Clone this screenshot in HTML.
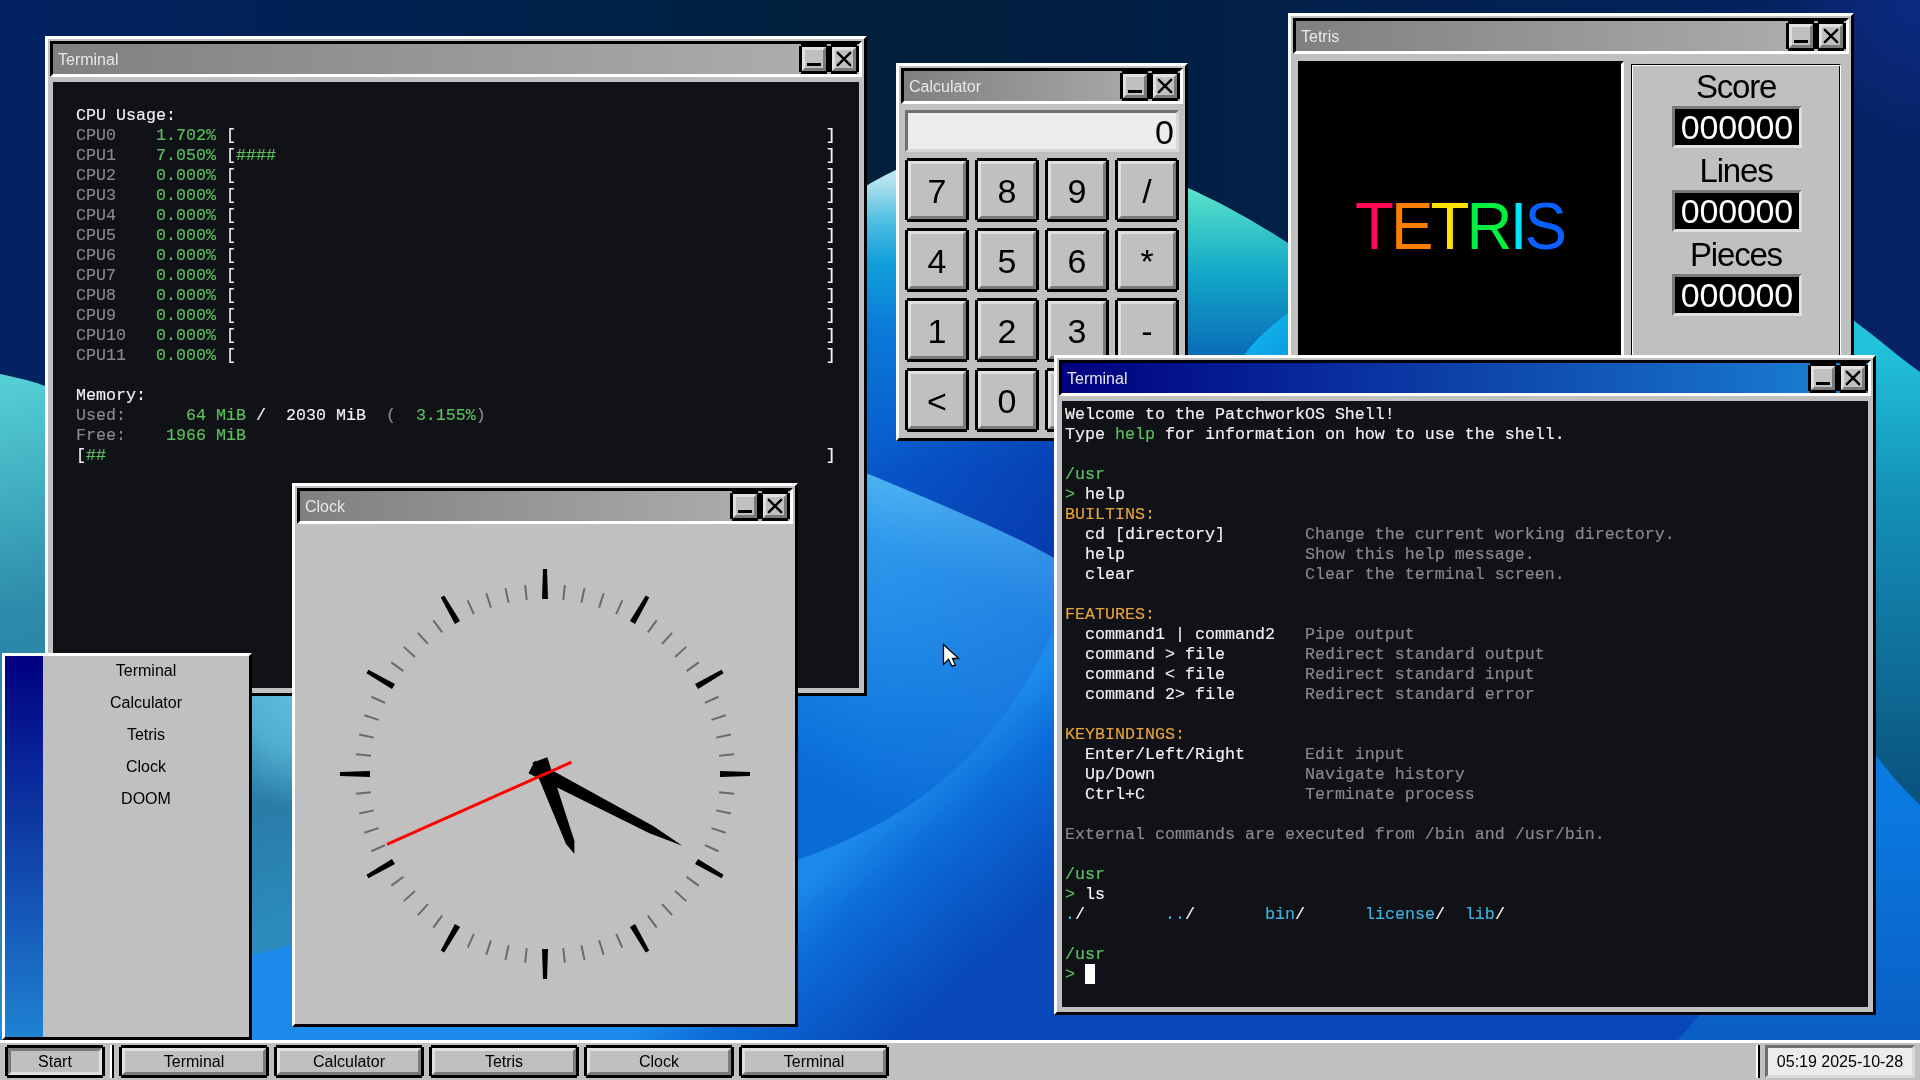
<!DOCTYPE html><html><head><meta charset="utf-8"><style>
*{box-sizing:border-box;margin:0;padding:0}
html,body{width:1920px;height:1080px;overflow:hidden;background:#001a4a;font-family:"Liberation Sans",sans-serif}
.win,.tbar,.sm{will-change:transform}
.abs{position:absolute}
.win{position:absolute;background:#c0c0c0;border:3px solid;border-color:#fff #000 #000 #fff}
.tb{position:absolute;left:2px;top:2px;height:36px;border:3px solid;border-color:#000 #fff #fff #000;background:linear-gradient(90deg,#808080,#b0b0b0)}
.tb.act{background:linear-gradient(90deg,#000080,#1a84d4)}
.tt{position:absolute;left:5px;top:1px;height:30px;line-height:30px;font-size:16px;color:#e8e8e8;white-space:pre}
.btn{position:absolute;top:0;width:30px;height:30px;background:#000;clip-path:polygon(2px 0,28px 0,28px 2px,30px 2px,30px 28px,28px 28px,28px 30px,2px 30px,2px 28px,0 28px,0 2px,2px 2px)}
.bi{position:absolute;left:3px;top:3px;width:24px;height:24px;border:3px solid;border-color:#e0e0e0 #7a7a7a #7a7a7a #e0e0e0;background:#c0c0c0}
.content{position:absolute}
.term{background:#111217;font-family:"Liberation Mono",monospace;font-size:16.667px;line-height:20px;white-space:pre;color:#f2f2f2;overflow:hidden;-webkit-text-stroke:0.15px currentColor}
.term .l{position:absolute;left:3px;height:20px}
.g{color:#5cc15c}.gr{color:#8a8a8a}.o{color:#e8a33d}.c{color:#3fb4e0}.w{color:#f2f2f2}
.tbar{position:absolute;left:0;top:1040px;width:1920px;height:40px;background:#c0c0c0;border-top:3px solid #fff;z-index:20}
.tbtn{position:absolute;top:2px;height:33px;background:#000;clip-path:polygon(2px 0,calc(100% - 2px) 0,calc(100% - 2px) 2px,100% 2px,100% calc(100% - 2px),calc(100% - 2px) calc(100% - 2px),calc(100% - 2px) 100%,2px 100%,2px calc(100% - 2px),0 calc(100% - 2px),0 2px,2px 2px)}
.tbi{position:absolute;left:3px;top:3px;right:3px;bottom:3px;border:3px solid;border-color:#e0e0e0 #7a7a7a #7a7a7a #e0e0e0;background:#c0c0c0;font-size:16px;color:#000;text-align:center;line-height:21px;white-space:pre}
.tbi.pr{border-color:#7a7a7a #e0e0e0 #e0e0e0 #7a7a7a}
.cbtn{position:absolute;width:64px;height:64px;background:#000;clip-path:polygon(2px 0,62px 0,62px 2px,64px 2px,64px 62px,62px 62px,62px 64px,2px 64px,2px 62px,0 62px,0 2px,2px 2px)}
.cbi{position:absolute;left:3px;top:3px;width:58px;height:58px;border:3px solid;border-color:#e0e0e0 #7a7a7a #7a7a7a #e0e0e0;background:#c0c0c0;font-size:34px;color:#000;text-align:center;line-height:54px}
.sbox{position:absolute;left:40px;width:130px;height:42px;border:3px solid;border-color:#7a7a7a #e0e0e0 #e0e0e0 #7a7a7a;background:#000;color:#fff;font-size:34px;line-height:37px;text-align:center;letter-spacing:-0.2px;text-indent:-0.2px}
.slab{position:absolute;left:0;width:100%;text-align:center;font-size:33px;color:#000;letter-spacing:-1.2px;line-height:32px}
</style></head><body><svg class="abs" style="left:0;top:0" width="1920" height="1080" viewBox="0 0 1920 1080">
<defs>
<linearGradient id="navy" x1="0" y1="0" x2="1920" y2="0" gradientUnits="userSpaceOnUse">
<stop offset="0" stop-color="#022262"/><stop offset="0.45" stop-color="#00203c"/><stop offset="0.68" stop-color="#02204a"/><stop offset="1" stop-color="#062266"/></linearGradient>
<radialGradient id="tr" cx="1920" cy="0" r="140" gradientUnits="userSpaceOnUse"><stop offset="0" stop-color="#0c2a80" stop-opacity="1"/><stop offset="1" stop-color="#0e2e88" stop-opacity="0"/></radialGradient>
<linearGradient id="bluef" x1="0" y1="400" x2="0" y2="1080" gradientUnits="userSpaceOnUse">
<stop offset="0" stop-color="#0a80e8"/><stop offset="1" stop-color="#0848bc"/></linearGradient>
<linearGradient id="pc" x1="0" y1="150" x2="0" y2="470" gradientUnits="userSpaceOnUse">
<stop offset="0" stop-color="#d0f0f4"/><stop offset="0.1" stop-color="#b0e2ee"/><stop offset="0.22" stop-color="#50bfe2"/><stop offset="0.35" stop-color="#12a0da"/><stop offset="0.56" stop-color="#0a7ad8"/><stop offset="1" stop-color="#0858cc"/></linearGradient>
<linearGradient id="pcr" x1="1190" y1="190" x2="1190" y2="355" gradientUnits="userSpaceOnUse">
<stop offset="0" stop-color="#58e2c8"/><stop offset="0.5" stop-color="#12a8c8"/><stop offset="1" stop-color="#0a6cb8"/></linearGradient>
<linearGradient id="p1" x1="960" y1="515" x2="836" y2="788" gradientUnits="userSpaceOnUse">
<stop offset="0" stop-color="#4ab2f2"/><stop offset="0.2" stop-color="#2e98ec"/><stop offset="0.6" stop-color="#1a84e4"/><stop offset="1" stop-color="#0a6cd8"/></linearGradient>
<linearGradient id="p1o" x1="880" y1="0" x2="1060" y2="0" gradientUnits="userSpaceOnUse">
<stop offset="0" stop-color="#0a5ad0" stop-opacity="0"/><stop offset="1" stop-color="#0a5ad0" stop-opacity="0.4"/></linearGradient>
<linearGradient id="dk" x1="880" y1="440" x2="1060" y2="560" gradientUnits="userSpaceOnUse">
<stop offset="0" stop-color="#0636a8" stop-opacity="0"/><stop offset="1" stop-color="#0636a8" stop-opacity="0.9"/></linearGradient>
<linearGradient id="p2" x1="930" y1="770" x2="1050" y2="905" gradientUnits="userSpaceOnUse">
<stop offset="0" stop-color="#1c8aea"/><stop offset="0.3" stop-color="#0c6cd8"/><stop offset="1" stop-color="#0848b8"/></linearGradient>
<linearGradient id="pl" x1="0" y1="372" x2="120" y2="960" gradientUnits="userSpaceOnUse">
<stop offset="0" stop-color="#56d2d6"/><stop offset="0.4" stop-color="#2c8aaa"/><stop offset="0.8" stop-color="#2a7ca8"/><stop offset="1" stop-color="#2a8cbc"/></linearGradient>
<linearGradient id="pr" x1="1900" y1="340" x2="1900" y2="790" gradientUnits="userSpaceOnUse">
<stop offset="0" stop-color="#22c4dc"/><stop offset="0.35" stop-color="#1490b8"/><stop offset="1" stop-color="#0a5480"/></linearGradient>
<linearGradient id="pr2" x1="1900" y1="800" x2="1900" y2="1040" gradientUnits="userSpaceOnUse">
<stop offset="0" stop-color="#0a7ae0"/><stop offset="1" stop-color="#0a5ec4"/></linearGradient>
<linearGradient id="pb3" x1="1250" y1="330" x2="1290" y2="380" gradientUnits="userSpaceOnUse">
<stop offset="0" stop-color="#12b4ec"/><stop offset="1" stop-color="#0a90e0"/></linearGradient>
<radialGradient id="rl" cx="310" cy="680" r="130" gradientUnits="userSpaceOnUse">
<stop offset="0" stop-color="#62c4e4" stop-opacity="1"/><stop offset="0.55" stop-color="#58b8d8" stop-opacity="0.85"/><stop offset="1" stop-color="#58b8d8" stop-opacity="0"/></radialGradient>
<clipPath id="pcclip"><path d="M560 760 C 620 560 660 470 700 400 C 760 260 860 145 1010 145 C 1060 145 1210 160 1400 330 C 1500 420 1600 600 1700 800 L 560 800 Z"/></clipPath>
</defs>
<rect width="1920" height="1080" fill="url(#navy)"/>
<rect x="1600" y="0" width="320" height="300" fill="url(#tr)"/>
<path d="M0 420 C 400 300 1300 300 1920 420 L1920 1080 L0 1080 Z" fill="url(#bluef)"/>
<path d="M560 760 C 620 560 660 470 700 400 C 760 260 860 145 1010 145 C 1060 145 1210 160 1400 330 C 1500 420 1600 600 1700 800 L 560 800 Z" fill="url(#pc)"/>
<rect x="1186" y="150" width="104" height="210" fill="url(#pcr)" clip-path="url(#pcclip)"/>
<path d="M1240 360 C 1255 340 1270 325 1300 305 L1300 400 L1240 400 Z" fill="url(#pb3)"/>
<path d="M800 380 L1100 380 L1100 640 L800 640 Z" fill="url(#dk)"/>
<path d="M600 420 C 700 430 800 445 866 473 C 930 500 1000 528 1054 558 C 1150 610 1250 700 1300 800 L 600 1000 Z" fill="url(#p1)"/>
<path d="M600 420 C 700 430 800 445 866 473 C 930 500 1000 528 1054 558 C 1150 610 1250 700 1300 800 L 600 1000 Z" fill="url(#p1o)"/>
<path d="M1100 540 C 1050 610 1030 780 797 860 C 720 885 660 897 600 905 C 400 905 200 900 -10 900 L -10 1080 L 1920 1080 L 1920 900 Z" fill="url(#p2)"/>
<path d="M-10 372 C 20 378 35 382 45 386 C 300 480 600 700 700 800 L 291 945 C 200 970 100 995 -10 1020 Z" fill="url(#pl)"/>
<ellipse cx="310" cy="680" rx="130" ry="130" fill="url(#rl)"/>
<path d="M1876 755 C 1890 775 1905 790 1920 805 L1920 1080 L1640 1080 C 1700 1020 1800 900 1876 755 Z" fill="url(#pr2)"/>
<path d="M1700 200 C 1780 260 1830 300 1853 320 C 1880 340 1900 358 1920 372 L1920 805 C 1905 790 1890 775 1876 755 C 1850 720 1800 690 1700 680 Z" fill="url(#pr)"/>
</svg><div class="win" style="left:45px;top:36px;width:822px;height:660px;z-index:2"><div class="tb" style="width:812px"><div class="tt">Terminal</div><div class="btn" style="left:746px"><div class="bi"><div class="abs" style="left:2px;top:13px;width:14px;height:3px;background:#000"></div></div></div><div class="btn" style="left:776px"><div class="bi"><svg class="abs" style="left:-3px;top:-3px" width="24" height="24" viewBox="0 0 24 24"><path d="M5.8 5.8L18.2 18.2M18.2 5.8L5.8 18.2" stroke="#000" stroke-width="2.4" stroke-linecap="round"/></svg></div></div></div><div class="content term" style="left:5px;top:43px;width:806px;height:606px;"><div class="l" style="top:24px;left:3px"><span class="w">  CPU Usage:</span></div><div class="l" style="top:44px;left:3px">  <span class="gr">CPU0    </span><span class="g">1.702%</span><span class="w"> [</span><span class="g"></span><span class="w">                                                           ]</span></div><div class="l" style="top:64px;left:3px">  <span class="gr">CPU1    </span><span class="g">7.050%</span><span class="w"> [</span><span class="g">####</span><span class="w">                                                       ]</span></div><div class="l" style="top:84px;left:3px">  <span class="gr">CPU2    </span><span class="g">0.000%</span><span class="w"> [</span><span class="g"></span><span class="w">                                                           ]</span></div><div class="l" style="top:104px;left:3px">  <span class="gr">CPU3    </span><span class="g">0.000%</span><span class="w"> [</span><span class="g"></span><span class="w">                                                           ]</span></div><div class="l" style="top:124px;left:3px">  <span class="gr">CPU4    </span><span class="g">0.000%</span><span class="w"> [</span><span class="g"></span><span class="w">                                                           ]</span></div><div class="l" style="top:144px;left:3px">  <span class="gr">CPU5    </span><span class="g">0.000%</span><span class="w"> [</span><span class="g"></span><span class="w">                                                           ]</span></div><div class="l" style="top:164px;left:3px">  <span class="gr">CPU6    </span><span class="g">0.000%</span><span class="w"> [</span><span class="g"></span><span class="w">                                                           ]</span></div><div class="l" style="top:184px;left:3px">  <span class="gr">CPU7    </span><span class="g">0.000%</span><span class="w"> [</span><span class="g"></span><span class="w">                                                           ]</span></div><div class="l" style="top:204px;left:3px">  <span class="gr">CPU8    </span><span class="g">0.000%</span><span class="w"> [</span><span class="g"></span><span class="w">                                                           ]</span></div><div class="l" style="top:224px;left:3px">  <span class="gr">CPU9    </span><span class="g">0.000%</span><span class="w"> [</span><span class="g"></span><span class="w">                                                           ]</span></div><div class="l" style="top:244px;left:3px">  <span class="gr">CPU10   </span><span class="g">0.000%</span><span class="w"> [</span><span class="g"></span><span class="w">                                                           ]</span></div><div class="l" style="top:264px;left:3px">  <span class="gr">CPU11   </span><span class="g">0.000%</span><span class="w"> [</span><span class="g"></span><span class="w">                                                           ]</span></div><div class="l" style="top:304px;left:3px"><span class="w">  Memory:</span></div><div class="l" style="top:324px;left:3px"><span class="gr">  Used:      </span><span class="g">64 MiB</span><span class="w"> /  2030 MiB</span><span class="gr">  (  </span><span class="g">3.155%</span><span class="gr">)</span></div><div class="l" style="top:344px;left:3px"><span class="gr">  Free:    </span><span class="g">1966 MiB</span></div><div class="l" style="top:364px;left:3px"><span class="w">  [</span><span class="g">##</span><span class="w">                                                                        ]</span></div></div></div><div class="win" style="left:292px;top:483px;width:506px;height:544px;z-index:3"><div class="tb" style="width:496px"><div class="tt">Clock</div><div class="btn" style="left:430px"><div class="bi"><div class="abs" style="left:2px;top:13px;width:14px;height:3px;background:#000"></div></div></div><div class="btn" style="left:460px"><div class="bi"><svg class="abs" style="left:-3px;top:-3px" width="24" height="24" viewBox="0 0 24 24"><path d="M5.8 5.8L18.2 18.2M18.2 5.8L5.8 18.2" stroke="#000" stroke-width="2.4" stroke-linecap="round"/></svg></div></div></div><div class="content " style="left:5px;top:43px;width:490px;height:490px;"><svg class="abs" style="left:0;top:0" width="490" height="490" viewBox="0 0 490 490"><polygon points="248.00,70.00 247.00,40.00 243.00,40.00 242.00,70.00" fill="#000"/><line x1="263.29" y1="70.96" x2="264.86" y2="56.04" stroke="#6a6a6a" stroke-width="2"/><line x1="281.38" y1="73.82" x2="284.50" y2="59.15" stroke="#6a6a6a" stroke-width="2"/><line x1="299.08" y1="78.57" x2="303.71" y2="64.30" stroke="#6a6a6a" stroke-width="2"/><line x1="316.18" y1="85.13" x2="322.28" y2="71.43" stroke="#6a6a6a" stroke-width="2"/><polygon points="335.10,94.95 349.23,68.46 345.77,66.46 329.90,91.95" fill="#000"/><line x1="347.86" y1="103.42" x2="356.68" y2="91.29" stroke="#6a6a6a" stroke-width="2"/><line x1="362.10" y1="114.95" x2="372.13" y2="103.80" stroke="#6a6a6a" stroke-width="2"/><line x1="375.05" y1="127.90" x2="386.20" y2="117.87" stroke="#6a6a6a" stroke-width="2"/><line x1="386.58" y1="142.14" x2="398.71" y2="133.32" stroke="#6a6a6a" stroke-width="2"/><polygon points="398.05,160.10 423.54,144.23 421.54,140.77 395.05,154.90" fill="#000"/><line x1="404.87" y1="173.82" x2="418.57" y2="167.72" stroke="#6a6a6a" stroke-width="2"/><line x1="411.43" y1="190.92" x2="425.70" y2="186.29" stroke="#6a6a6a" stroke-width="2"/><line x1="416.18" y1="208.62" x2="430.85" y2="205.50" stroke="#6a6a6a" stroke-width="2"/><line x1="419.04" y1="226.71" x2="433.96" y2="225.14" stroke="#6a6a6a" stroke-width="2"/><polygon points="420.00,248.00 450.00,247.00 450.00,243.00 420.00,242.00" fill="#000"/><line x1="419.04" y1="263.29" x2="433.96" y2="264.86" stroke="#6a6a6a" stroke-width="2"/><line x1="416.18" y1="281.38" x2="430.85" y2="284.50" stroke="#6a6a6a" stroke-width="2"/><line x1="411.43" y1="299.08" x2="425.70" y2="303.71" stroke="#6a6a6a" stroke-width="2"/><line x1="404.87" y1="316.18" x2="418.57" y2="322.28" stroke="#6a6a6a" stroke-width="2"/><polygon points="395.05,335.10 421.54,349.23 423.54,345.77 398.05,329.90" fill="#000"/><line x1="386.58" y1="347.86" x2="398.71" y2="356.68" stroke="#6a6a6a" stroke-width="2"/><line x1="375.05" y1="362.10" x2="386.20" y2="372.13" stroke="#6a6a6a" stroke-width="2"/><line x1="362.10" y1="375.05" x2="372.13" y2="386.20" stroke="#6a6a6a" stroke-width="2"/><line x1="347.86" y1="386.58" x2="356.68" y2="398.71" stroke="#6a6a6a" stroke-width="2"/><polygon points="329.90,398.05 345.77,423.54 349.23,421.54 335.10,395.05" fill="#000"/><line x1="316.18" y1="404.87" x2="322.28" y2="418.57" stroke="#6a6a6a" stroke-width="2"/><line x1="299.08" y1="411.43" x2="303.71" y2="425.70" stroke="#6a6a6a" stroke-width="2"/><line x1="281.38" y1="416.18" x2="284.50" y2="430.85" stroke="#6a6a6a" stroke-width="2"/><line x1="263.29" y1="419.04" x2="264.86" y2="433.96" stroke="#6a6a6a" stroke-width="2"/><polygon points="242.00,420.00 243.00,450.00 247.00,450.00 248.00,420.00" fill="#000"/><line x1="226.71" y1="419.04" x2="225.14" y2="433.96" stroke="#6a6a6a" stroke-width="2"/><line x1="208.62" y1="416.18" x2="205.50" y2="430.85" stroke="#6a6a6a" stroke-width="2"/><line x1="190.92" y1="411.43" x2="186.29" y2="425.70" stroke="#6a6a6a" stroke-width="2"/><line x1="173.82" y1="404.87" x2="167.72" y2="418.57" stroke="#6a6a6a" stroke-width="2"/><polygon points="154.90,395.05 140.77,421.54 144.23,423.54 160.10,398.05" fill="#000"/><line x1="142.14" y1="386.58" x2="133.32" y2="398.71" stroke="#6a6a6a" stroke-width="2"/><line x1="127.90" y1="375.05" x2="117.87" y2="386.20" stroke="#6a6a6a" stroke-width="2"/><line x1="114.95" y1="362.10" x2="103.80" y2="372.13" stroke="#6a6a6a" stroke-width="2"/><line x1="103.42" y1="347.86" x2="91.29" y2="356.68" stroke="#6a6a6a" stroke-width="2"/><polygon points="91.95,329.90 66.46,345.77 68.46,349.23 94.95,335.10" fill="#000"/><line x1="85.13" y1="316.18" x2="71.43" y2="322.28" stroke="#6a6a6a" stroke-width="2"/><line x1="78.57" y1="299.08" x2="64.30" y2="303.71" stroke="#6a6a6a" stroke-width="2"/><line x1="73.82" y1="281.38" x2="59.15" y2="284.50" stroke="#6a6a6a" stroke-width="2"/><line x1="70.96" y1="263.29" x2="56.04" y2="264.86" stroke="#6a6a6a" stroke-width="2"/><polygon points="70.00,242.00 40.00,243.00 40.00,247.00 70.00,248.00" fill="#000"/><line x1="70.96" y1="226.71" x2="56.04" y2="225.14" stroke="#6a6a6a" stroke-width="2"/><line x1="73.82" y1="208.62" x2="59.15" y2="205.50" stroke="#6a6a6a" stroke-width="2"/><line x1="78.57" y1="190.92" x2="64.30" y2="186.29" stroke="#6a6a6a" stroke-width="2"/><line x1="85.13" y1="173.82" x2="71.43" y2="167.72" stroke="#6a6a6a" stroke-width="2"/><polygon points="94.95,154.90 68.46,140.77 66.46,144.23 91.95,160.10" fill="#000"/><line x1="103.42" y1="142.14" x2="91.29" y2="133.32" stroke="#6a6a6a" stroke-width="2"/><line x1="114.95" y1="127.90" x2="103.80" y2="117.87" stroke="#6a6a6a" stroke-width="2"/><line x1="127.90" y1="114.95" x2="117.87" y2="103.80" stroke="#6a6a6a" stroke-width="2"/><line x1="142.14" y1="103.42" x2="133.32" y2="91.29" stroke="#6a6a6a" stroke-width="2"/><polygon points="160.10,91.95 144.23,66.46 140.77,68.46 154.90,94.95" fill="#000"/><line x1="173.82" y1="85.13" x2="167.72" y2="71.43" stroke="#6a6a6a" stroke-width="2"/><line x1="190.92" y1="78.57" x2="186.29" y2="64.30" stroke="#6a6a6a" stroke-width="2"/><line x1="208.62" y1="73.82" x2="205.50" y2="59.15" stroke="#6a6a6a" stroke-width="2"/><line x1="226.71" y1="70.96" x2="225.14" y2="56.04" stroke="#6a6a6a" stroke-width="2"/><polygon points="247.33,228.16 232.31,233.68 265.98,315.06 274.35,324.77 274.43,311.96" fill="#000"/><polygon points="234.95,231.85 228.46,244.25 349.49,304.14 382.36,316.81 353.20,297.05" fill="#000"/><polygon points="272.10,234.57 270.88,231.83 86.35,314.00 87.57,316.74" fill="#ff0000"/></svg></div></div><div class="win" style="left:896px;top:63px;width:292px;height:378px;z-index:4"><div class="tb" style="width:282px"><div class="tt">Calculator</div><div class="btn" style="left:216px"><div class="bi"><div class="abs" style="left:2px;top:13px;width:14px;height:3px;background:#000"></div></div></div><div class="btn" style="left:246px"><div class="bi"><svg class="abs" style="left:-3px;top:-3px" width="24" height="24" viewBox="0 0 24 24"><path d="M5.8 5.8L18.2 18.2M18.2 5.8L5.8 18.2" stroke="#000" stroke-width="2.4" stroke-linecap="round"/></svg></div></div></div><div class="content " style="left:5px;top:43px;width:276px;height:324px;"><div class="abs" style="left:1px;top:1px;width:274px;height:42px;border:3px solid;border-color:#707070 #d8d8d8 #d8d8d8 #707070;background:#ececec;font-size:34px;line-height:38px;text-align:right;padding-right:2px;color:#000">0</div><div class="cbtn" style="left:1px;top:49px"><div class="cbi">7</div></div><div class="cbtn" style="left:71px;top:49px"><div class="cbi">8</div></div><div class="cbtn" style="left:141px;top:49px"><div class="cbi">9</div></div><div class="cbtn" style="left:211px;top:49px"><div class="cbi">/</div></div><div class="cbtn" style="left:1px;top:119px"><div class="cbi">4</div></div><div class="cbtn" style="left:71px;top:119px"><div class="cbi">5</div></div><div class="cbtn" style="left:141px;top:119px"><div class="cbi">6</div></div><div class="cbtn" style="left:211px;top:119px"><div class="cbi">*</div></div><div class="cbtn" style="left:1px;top:189px"><div class="cbi">1</div></div><div class="cbtn" style="left:71px;top:189px"><div class="cbi">2</div></div><div class="cbtn" style="left:141px;top:189px"><div class="cbi">3</div></div><div class="cbtn" style="left:211px;top:189px"><div class="cbi">-</div></div><div class="cbtn" style="left:1px;top:259px"><div class="cbi">&lt;</div></div><div class="cbtn" style="left:71px;top:259px"><div class="cbi">0</div></div><div class="cbtn" style="left:141px;top:259px"><div class="cbi">.</div></div><div class="cbtn" style="left:211px;top:259px"><div class="cbi">=</div></div></div></div><div class="win" style="left:1288px;top:13px;width:566px;height:708px;z-index:5"><div class="tb" style="width:556px"><div class="tt">Tetris</div><div class="btn" style="left:490px"><div class="bi"><div class="abs" style="left:2px;top:13px;width:14px;height:3px;background:#000"></div></div></div><div class="btn" style="left:520px"><div class="bi"><svg class="abs" style="left:-3px;top:-3px" width="24" height="24" viewBox="0 0 24 24"><path d="M5.8 5.8L18.2 18.2M18.2 5.8L5.8 18.2" stroke="#000" stroke-width="2.4" stroke-linecap="round"/></svg></div></div></div><div class="content " style="left:5px;top:43px;width:550px;height:654px;"><div class="abs" style="left:2px;top:2px;width:326px;height:646px;border:3px solid;border-color:#000 #fff #fff #000;background:#000"></div><div class="abs" style="left:2px;top:132px;width:326px;height:70px;text-align:center;font-size:66px;line-height:70px;letter-spacing:-3px;text-indent:-3px;transform:scaleX(0.965)"><span style="color:#ff0a55">T</span><span style="color:#ff8000">E</span><span style="color:#ffe000">T</span><span style="color:#00f040">R</span><span style="color:#00e4ff">I</span><span style="color:#0a60ff">S</span></div><div class="abs" style="left:335px;top:5px;width:210px;height:700px;border:1px solid;border-color:#000 #fff #fff #000;box-shadow:inset 1px 1px 0 #fff, inset -1px -1px 0 #000"><div class="slab" style="top:6px">Score</div><div class="sbox" style="top:41px">000000</div><div class="slab" style="top:90px">Lines</div><div class="sbox" style="top:125px">000000</div><div class="slab" style="top:174px">Pieces</div><div class="sbox" style="top:209px">000000</div></div></div></div><div class="win" style="left:1054px;top:355px;width:822px;height:660px;z-index:6"><div class="tb act" style="width:812px"><div class="tt">Terminal</div><div class="btn" style="left:746px"><div class="bi"><div class="abs" style="left:2px;top:13px;width:14px;height:3px;background:#000"></div></div></div><div class="btn" style="left:776px"><div class="bi"><svg class="abs" style="left:-3px;top:-3px" width="24" height="24" viewBox="0 0 24 24"><path d="M5.8 5.8L18.2 18.2M18.2 5.8L5.8 18.2" stroke="#000" stroke-width="2.4" stroke-linecap="round"/></svg></div></div></div><div class="content term" style="left:5px;top:43px;width:806px;height:606px;"><div class="l" style="top:4px;left:3px"><span class="w">Welcome to the PatchworkOS Shell!</span></div><div class="l" style="top:24px;left:3px"><span class="w">Type </span><span class="g">help</span><span class="w"> for information on how to use the shell.</span></div><div class="l" style="top:64px;left:3px"><span class="g">/usr</span></div><div class="l" style="top:84px;left:3px"><span class="g">&gt; </span><span class="w">help</span></div><div class="l" style="top:104px;left:3px"><span class="o">BUILTINS:</span></div><div class="l" style="top:124px;left:3px"><span class="w">  cd [directory]        </span><span class="gr">Change the current working directory.</span></div><div class="l" style="top:144px;left:3px"><span class="w">  help                  </span><span class="gr">Show this help message.</span></div><div class="l" style="top:164px;left:3px"><span class="w">  clear                 </span><span class="gr">Clear the terminal screen.</span></div><div class="l" style="top:204px;left:3px"><span class="o">FEATURES:</span></div><div class="l" style="top:224px;left:3px"><span class="w">  command1 | command2   </span><span class="gr">Pipe output</span></div><div class="l" style="top:244px;left:3px"><span class="w">  command &gt; file        </span><span class="gr">Redirect standard output</span></div><div class="l" style="top:264px;left:3px"><span class="w">  command &lt; file        </span><span class="gr">Redirect standard input</span></div><div class="l" style="top:284px;left:3px"><span class="w">  command 2&gt; file       </span><span class="gr">Redirect standard error</span></div><div class="l" style="top:324px;left:3px"><span class="o">KEYBINDINGS:</span></div><div class="l" style="top:344px;left:3px"><span class="w">  Enter/Left/Right      </span><span class="gr">Edit input</span></div><div class="l" style="top:364px;left:3px"><span class="w">  Up/Down               </span><span class="gr">Navigate history</span></div><div class="l" style="top:384px;left:3px"><span class="w">  Ctrl+C                </span><span class="gr">Terminate process</span></div><div class="l" style="top:424px;left:3px"><span class="gr">External commands are executed from /bin and /usr/bin.</span></div><div class="l" style="top:464px;left:3px"><span class="g">/usr</span></div><div class="l" style="top:484px;left:3px"><span class="g">&gt; </span><span class="w">ls</span></div><div class="l" style="top:504px;left:3px"><span class="c">.</span><span class="w">/        </span><span class="c">..</span><span class="w">/       </span><span class="c">bin</span><span class="w">/      </span><span class="c">license</span><span class="w">/  </span><span class="c">lib</span><span class="w">/</span></div><div class="l" style="top:544px;left:3px"><span class="g">/usr</span></div><div class="l" style="top:564px;left:3px"><span class="g">&gt; </span></div><div class="abs" style="left:23px;top:563px;width:10px;height:20px;background:#fff;-webkit-text-stroke:0"></div></div></div><div class="abs sm" style="left:2px;top:653px;width:250px;height:387px;border:3px solid;border-color:#fff #000 #000 #fff;background:#c0c0c0;z-index:15"><div class="abs" style="left:0;top:0;width:38px;height:381px;background:linear-gradient(180deg,#000080,#1f82d2)"></div><div class="abs" style="left:38px;width:206px;top:3px;height:24px;line-height:24px;text-align:center;font-size:16px;color:#000">Terminal</div><div class="abs" style="left:38px;width:206px;top:35px;height:24px;line-height:24px;text-align:center;font-size:16px;color:#000">Calculator</div><div class="abs" style="left:38px;width:206px;top:67px;height:24px;line-height:24px;text-align:center;font-size:16px;color:#000">Tetris</div><div class="abs" style="left:38px;width:206px;top:99px;height:24px;line-height:24px;text-align:center;font-size:16px;color:#000">Clock</div><div class="abs" style="left:38px;width:206px;top:131px;height:24px;line-height:24px;text-align:center;font-size:16px;color:#000">DOOM</div></div><div class="tbar"><div class="tbtn" style="left:5px;width:100px"><div class="tbi pr">Start</div></div><div class="abs" style="left:110px;top:2px;width:2px;height:33px;background:#fff"></div><div class="abs" style="left:112px;top:2px;width:2px;height:33px;background:#000"></div><div class="tbtn" style="left:119px;width:150px"><div class="tbi">Terminal</div></div><div class="tbtn" style="left:274px;width:150px"><div class="tbi">Calculator</div></div><div class="tbtn" style="left:429px;width:150px"><div class="tbi">Tetris</div></div><div class="tbtn" style="left:584px;width:150px"><div class="tbi">Clock</div></div><div class="tbtn" style="left:739px;width:150px"><div class="tbi">Terminal</div></div><div class="abs" style="left:1756px;top:2px;width:2px;height:33px;background:#fff"></div><div class="abs" style="left:1758px;top:2px;width:2px;height:33px;background:#000"></div><div class="abs" style="left:1765px;top:2px;width:150px;height:33px;border:3px solid;border-color:#707070 #d8d8d8 #d8d8d8 #707070;background:#ececec;font-size:16px;line-height:27px;text-align:center;color:#000">05:19 2025-10-28</div></div><svg class="abs" style="left:942px;top:643px;z-index:30" width="20" height="26" viewBox="0 0 20 26"><path d="M1.5 1.5 L1.5 21.5 L6.5 16.3 L10 23.2 L13.3 22 L10.5 15.5 L16.8 15.5 Z" fill="#fff" stroke="#000" stroke-width="1.3" stroke-linejoin="miter"/></svg></body></html>
